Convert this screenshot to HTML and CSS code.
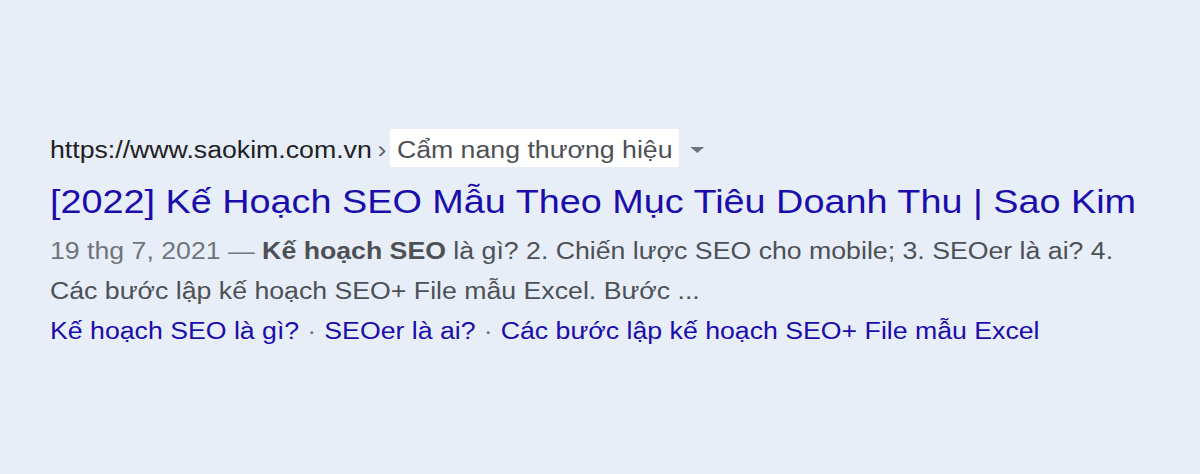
FILE: index.html
```html
<!DOCTYPE html>
<html lang="vi">
<head>
<meta charset="utf-8">
<link rel="stylesheet" href="styles.css">
</head>
<body>
<div class="page">
  <div class="result">
    <div class="url-line">
      <span class="domain">https://www.saokim.com.vn</span>
      <span class="sep">›</span>
      <span class="crumb">Cẩm nang thương hiệu</span>
      <span class="caret"></span>
    </div>
    <h3 class="title">[2022] Kế Hoạch SEO Mẫu Theo Mục Tiêu Doanh Thu | Sao Kim</h3>
    <div class="snippet"><span class="date">19 thg 7, 2021 — </span><b>Kế hoạch SEO</b> là gì? 2. Chiến lược SEO cho mobile; 3. SEOer là ai? 4. Các bước lập kế hoạch SEO+ File mẫu Excel. Bước ...</div>
    <div class="sitelinks">
      <a>Kế hoạch SEO là gì?</a><span class="dot">·</span><a>SEOer là ai?</a><span class="dot">·</span><a>Các bước lập kế hoạch SEO+ File mẫu Excel</a>
    </div>
  </div>
</div>
</body>
</html>
```
FILE: styles.css
```css
html, body {
  margin: 0;
  padding: 0;
}
body {
  background: #e8eef7;
  width: 1200px;
  height: 474px;
  font-family: "Liberation Sans", Arial, sans-serif;
  overflow: hidden;
}
.page {
  padding: 129px 0 0 50px;
}
.result {
  width: 945px;
  transform: scaleX(1.16);
  transform-origin: 0 0;
}
.url-line {
  display: flex;
  align-items: baseline;
  height: 38px;
  font-size: 23px;
}
.domain {
  color: #202124;
}
.sep {
  color: #5f6368;
  margin: 0 3px 0 5px;
}
.crumb {
  box-sizing: border-box;
  background: #ffffff;
  color: #4d5156;
  padding: 5px 5px 0 6px;
  height: 38px;
  line-height: 33px;
}
.caret {
  align-self: center;
  width: 0;
  height: 0;
  border-left: 6px solid transparent;
  border-right: 6px solid transparent;
  border-top: 6px solid #70757a;
  margin: 3px 0 0 10px;
}
.title {
  margin: 12px 0 0;
  font-weight: normal;
  font-size: 32.6px;
  line-height: 46px;
  color: #1a0dab;
  white-space: nowrap;
}
.snippet {
  margin-top: 6px;
  font-size: 23px;
  line-height: 40px;
  color: #4d5156;
}
.date {
  color: #70757a;
}
.snippet b {
  color: #4d5156;
}
.sitelinks {
  font-size: 23px;
  line-height: 40px;
  color: #1a0dab;
}
.dot {
  color: #70757a;
  margin: 0 7px;
}
```
